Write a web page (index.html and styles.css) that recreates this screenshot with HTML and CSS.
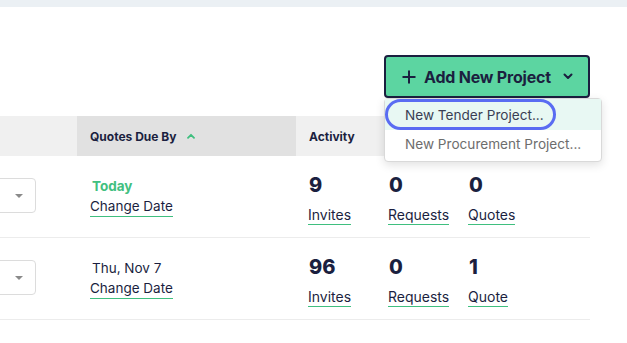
FILE: index.html
```html
<!DOCTYPE html>
<html>
<head>
<meta charset="utf-8">
<link rel="stylesheet" href="styles.css">
</head>
<body>
<div class="topbar"></div>
<div class="page">
  <div class="toolbar">
    <div class="add-wrap">
      <button class="add-btn">
        <svg class="plus" width="14" height="14" viewBox="0 0 14 14"><path d="M7 0.5v13M0.5 7h13" stroke="#1b1f3f" stroke-width="2" fill="none"/></svg>
        <span>Add New Project</span>
        <svg class="chev" width="10" height="7" viewBox="0 0 10 7"><path d="M1.5 1.5l3.5 3.5 3.5-3.5" stroke="#1b1f3f" stroke-width="2" fill="none" stroke-linecap="round" stroke-linejoin="round"/></svg>
      </button>
      <ul class="menu">
        <li class="menu-item active"><a class="focus">New Tender Project...</a></li>
        <li class="menu-item"><a class="plain">New Procurement Project...</a></li>
      </ul>
    </div>
  </div>

  <div class="table">
    <div class="row head">
      <div class="c1"></div>
      <div class="c2 sorted">Quotes Due By
        <svg class="up" width="8" height="6" viewBox="0 0 8 6"><path d="M1 4.8l3-3 3 3" stroke="#3fbf7f" stroke-width="1.8" fill="none" stroke-linecap="round" stroke-linejoin="round"/></svg>
      </div>
      <div class="c3">Activity</div>
    </div>

    <div class="row body">
      <div class="c1"><div class="select"><span class="caret"></span></div></div>
      <div class="c2">
        <div class="due today">Today</div>
        <a class="link date-link">Change Date</a>
      </div>
      <div class="c3 stats">
        <div class="stat"><div class="num">9</div><a class="link">Invites</a></div>
        <div class="stat"><div class="num">0</div><a class="link">Requests</a></div>
        <div class="stat"><div class="num">0</div><a class="link">Quotes</a></div>
      </div>
    </div>

    <div class="row body">
      <div class="c1"><div class="select"><span class="caret"></span></div></div>
      <div class="c2">
        <div class="due">Thu, Nov 7</div>
        <a class="link date-link">Change Date</a>
      </div>
      <div class="c3 stats">
        <div class="stat"><div class="num">96</div><a class="link">Invites</a></div>
        <div class="stat"><div class="num">0</div><a class="link">Requests</a></div>
        <div class="stat"><div class="num">1</div><a class="link">Quote</a></div>
      </div>
    </div>
  </div>
</div>
</body>
</html>
```

FILE: styles.css
```css
* { box-sizing: border-box; }
html, body { margin: 0; padding: 0; background: #fff; }
body {
  font-family: Inter, "Noto Sans", sans-serif;
  color: #1b1f3f;
  width: 627px;
  height: 343px;
  overflow: hidden;
}
.topbar { height: 7px; background: #ebf0f4; }
.page { width: 590px; }
.toolbar {
  display: flex;
  justify-content: flex-end;
  padding-top: 48px;
  height: 109px;
}
.add-wrap { position: relative; }
.add-btn {
  display: flex;
  align-items: center;
  height: 43px;
  width: 206px;
  padding: 0 0 0 16px;
  background: #5cd5a1;
  border: 2px solid #1b1f3f;
  border-radius: 4px;
  font-family: Inter, sans-serif;
  font-weight: 700;
  font-size: 16px;
  color: #1b1f3f;
  letter-spacing: -0.2px;
}
.add-btn .plus { margin-right: 8px; }
.add-btn .chev { margin-left: 12px; }
.menu {
  position: absolute;
  left: 0;
  top: 43px;
  width: 218px;
  margin: 0;
  padding: 0 0 3px;
  list-style: none;
  background: #fff;
  border: 1px solid #d9d9d9;
  border-radius: 4px;
  box-shadow: 0 3px 10px rgba(0,0,0,0.12);
  z-index: 5;
  font-size: 13.6px;
}
.menu-item { height: 28px; display: flex; align-items: center; }
.menu-item.active { background: #e8f8f3; height: 31px; }
.menu-item a { color: #6d6d6d; padding-left: 20px; line-height: 20px; }
.menu-item a.focus {
  color: #3a3e54;
  border: 3px solid #5a6cf2;
  border-radius: 16px;
  padding: 3px 9px 2px 17px;
  line-height: 20px;
  height: 31px;
}

.table { width: 590px; }
.row { display: flex; }
.c1 { width: 77px; flex: none; }
.c2 { width: 219px; flex: none; padding-left: 13px; }
.c3 { flex: 1; padding-left: 13px; }
.head { height: 40px; background: #f0f0f0; align-items: center; }
.head > div { height: 40px; display: flex; align-items: center; font-size: 12px; font-weight: 700; }
.head .sorted { background: #e1e1e1; }
.head .up { margin-left: 11px; }

.body { height: 82px; border-bottom: 1px solid #ececec; }
.body .c1 { padding-top: 22px; display: flex; justify-content: flex-end; padding-right: 41px; }
.select {
  width: 100px;
  height: 35px;
  flex: none;
  border: 1px solid #dcdcdc;
  border-radius: 4px;
  display: flex;
  align-items: center;
  justify-content: flex-end;
  padding-right: 12px;
}
.caret {
  width: 0; height: 0;
  border-left: 4px solid transparent;
  border-right: 4px solid transparent;
  border-top: 4px solid #8a8a8a;
}
.body .c2 { padding-top: 20px; font-size: 13.5px; }
.due { line-height: 21px; padding-left: 2px; }
.due.today { color: #42bf80; font-weight: 700; }
.link {
  display: inline-block;
  line-height: 18px;
  font-size: 14px;
  color: #1b1f3f;
  border-bottom: 1px solid #3fbf7f;
}
.date-link { font-size: 13.5px; line-height: 19px; }
.stats { display: flex; padding-top: 17px; }
.stat { width: 80px; }
.num { font-size: 20px; font-weight: 800; line-height: 24px; margin-bottom: 7px; }
.stat .link { margin-left: -1px; }
```
